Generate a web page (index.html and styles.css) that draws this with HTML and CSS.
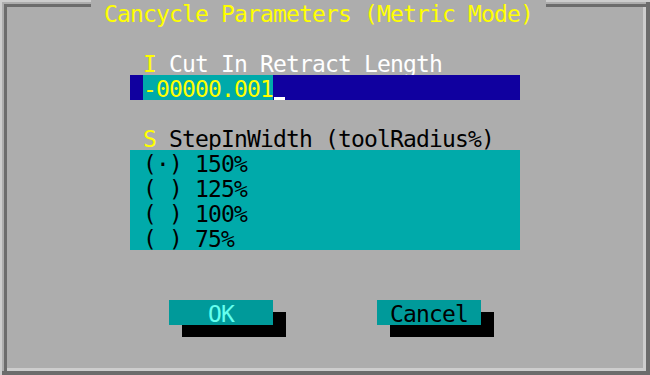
FILE: index.html
```html
<!DOCTYPE html>
<html lang="en">
<head>
<meta charset="UTF-8">
<title>Cancycle Parameters</title>
<link rel="stylesheet" href="styles.css">
</head>
<body>

<div class="screen">
    <div class="title"> Cancycle Parameters (Metric Mode) </div>

    <div class="label label-retract"><span class="hotkey">I</span> Cut In Retract Length</div>
    <div class="input">
        <span class="sel">-00000.001</span>
        <span class="cursor"></span>
    </div>

    <div class="label label-step"><span class="hotkey">S</span> StepInWidth (toolRadius%)</div>
    <div class="radios">
        <div class="radio">(·) 150%</div>
        <div class="radio">( ) 125%</div>
        <div class="radio">( ) 100%</div>
        <div class="radio">( ) 75%</div>
    </div>

    <div class="btn btn-ok">OK</div>
    <div class="btn btn-cancel">Cancel</div>
</div>

</body>
</html>
```

FILE: styles.css
```css
body {
    margin: 0;
    padding: 0;
    background-color: #adadad;
}

/* text screen: 50 x 15 cells of 13x25 px */
.screen {
    display: grid;
    grid-template-columns: repeat(50, 13px);
    grid-template-rows: repeat(15, 25px);
    width: 650px;
    height: 375px;
    background-color: #adadad;
    font-family: "DejaVu Sans Mono", monospace;
    font-size: 23px;
    letter-spacing: -0.85px;
    line-height: 28px;
    color: #000;
    /* double bevel frame */
    box-shadow:
        inset 2px 2px 0 #cdcdcd,
        inset -4px -4px 0 #6c6c6c,
        inset 4px 4px 0 #adadad,
        inset 7px 7px 0 #6c6c6c,
        inset -7px -7px 0 #cdcdcd;
}

.title, .label, .sel, .radio, .btn {
    white-space: pre;
}

.title {
    grid-column: 8 / 43;
    grid-row: 1;
    background-color: #adadad;
    color: #ffff00;
}

.label {
    grid-column: 12 / 45;
}

.label-retract {
    grid-row: 3;
    color: #fff;
}

.label-step {
    grid-row: 6;
}

.hotkey {
    color: #ffff00;
}

.input {
    grid-column: 11 / 41;
    grid-row: 4;
    display: flex;
    padding-left: 13px;
    background-color: #10009f;
}

.sel {
    background-color: #00aaaa;
    color: #ffff00;
}

.cursor {
    align-self: flex-start;
    width: 11px;
    height: 3px;
    margin: 22px 0 0 1px;
    background-color: #fff;
}

.radios {
    grid-column: 11 / 41;
    grid-row: 7 / 11;
    padding-left: 13px;
    background-color: #00aaaa;
}

.radio {
    height: 25px;
}

.btn {
    grid-row: 13;
    text-align: center;
    background-color: #009a9a;
    box-shadow: 13px 12px 0 #000;
}

.btn-ok {
    grid-column: 14 / 22;
    color: #66ffee;
}

.btn-cancel {
    grid-column: 30 / 38;
    color: #000;
}
```
